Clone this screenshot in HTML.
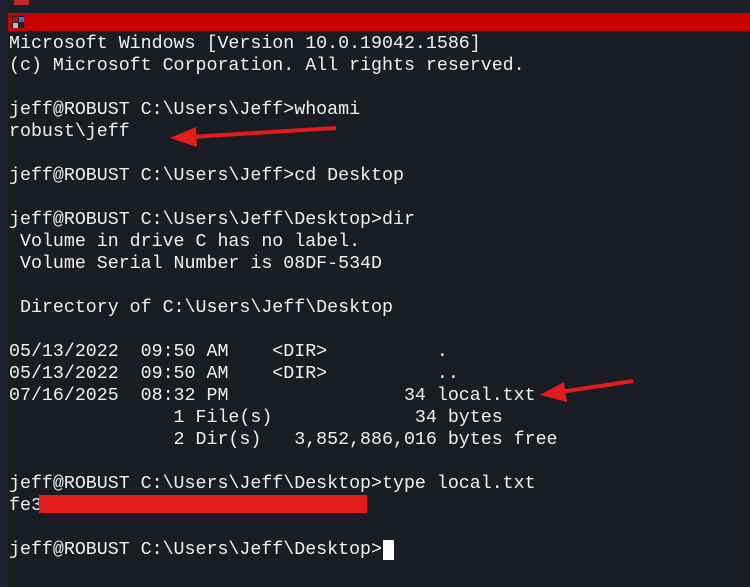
<!DOCTYPE html>
<html><head><style>
html,body{margin:0;padding:0;width:750px;height:587px;overflow:hidden;background:#1a1c23;}
.top{position:absolute;left:0;top:0;width:750px;height:13px;background:#1e2028;}
.edge{position:absolute;left:0;top:0;width:8px;height:587px;background:#1f2230;}
.bar{position:absolute;left:8px;top:13px;width:742px;height:18px;background:#c80000;}
pre{position:absolute;left:9px;top:33px;margin:0;font-family:"Liberation Mono",monospace;font-size:18.3px;line-height:22px;color:#f0f0f0;}
.red{position:absolute;left:39px;top:495px;width:328px;height:18px;background:#e31b1b;}
.cur{position:absolute;left:383px;top:540px;width:11px;height:20px;background:#fff;}
</style></head><body>
<div class="top"></div>
<div style="position:absolute;left:14px;top:0;width:15px;height:5px;background:#c0282a"></div>
<div class="edge"></div>
<div class="bar"></div>
<div style="position:absolute;left:12px;top:16px;width:12px;height:12px;background:#222"></div>
<div style="position:absolute;left:13px;top:17px;width:5px;height:5px;background:#d00"></div>
<div style="position:absolute;left:19px;top:17px;width:5px;height:5px;background:#1a7fd4"></div>
<div style="position:absolute;left:13px;top:23px;width:5px;height:5px;background:#bbb"></div>
<pre>Microsoft Windows [Version 10.0.19042.1586]
(c) Microsoft Corporation. All rights reserved.

jeff@ROBUST C:\Users\Jeff>whoami
robust\jeff

jeff@ROBUST C:\Users\Jeff>cd Desktop

jeff@ROBUST C:\Users\Jeff\Desktop>dir
 Volume in drive C has no label.
 Volume Serial Number is 08DF-534D

 Directory of C:\Users\Jeff\Desktop

05/13/2022  09:50 AM    &lt;DIR&gt;          .
05/13/2022  09:50 AM    &lt;DIR&gt;          ..
07/16/2025  08:32 PM                34 local.txt
               1 File(s)             34 bytes
               2 Dir(s)   3,852,886,016 bytes free

jeff@ROBUST C:\Users\Jeff\Desktop>type local.txt
fe3

jeff@ROBUST C:\Users\Jeff\Desktop></pre>
<div class="red"></div>
<div class="cur"></div>
<svg style="position:absolute;left:0;top:0" width="750" height="587">
<line x1="336" y1="128" x2="190" y2="137" stroke="#e21c1c" stroke-width="4"/>
<polygon points="170,138 196,127 197,147" fill="#e21c1c"/>
<line x1="633" y1="381" x2="560" y2="392" stroke="#e21c1c" stroke-width="4"/>
<polygon points="540,395 564,382 567,402" fill="#e21c1c"/>
</svg>
</body></html>
